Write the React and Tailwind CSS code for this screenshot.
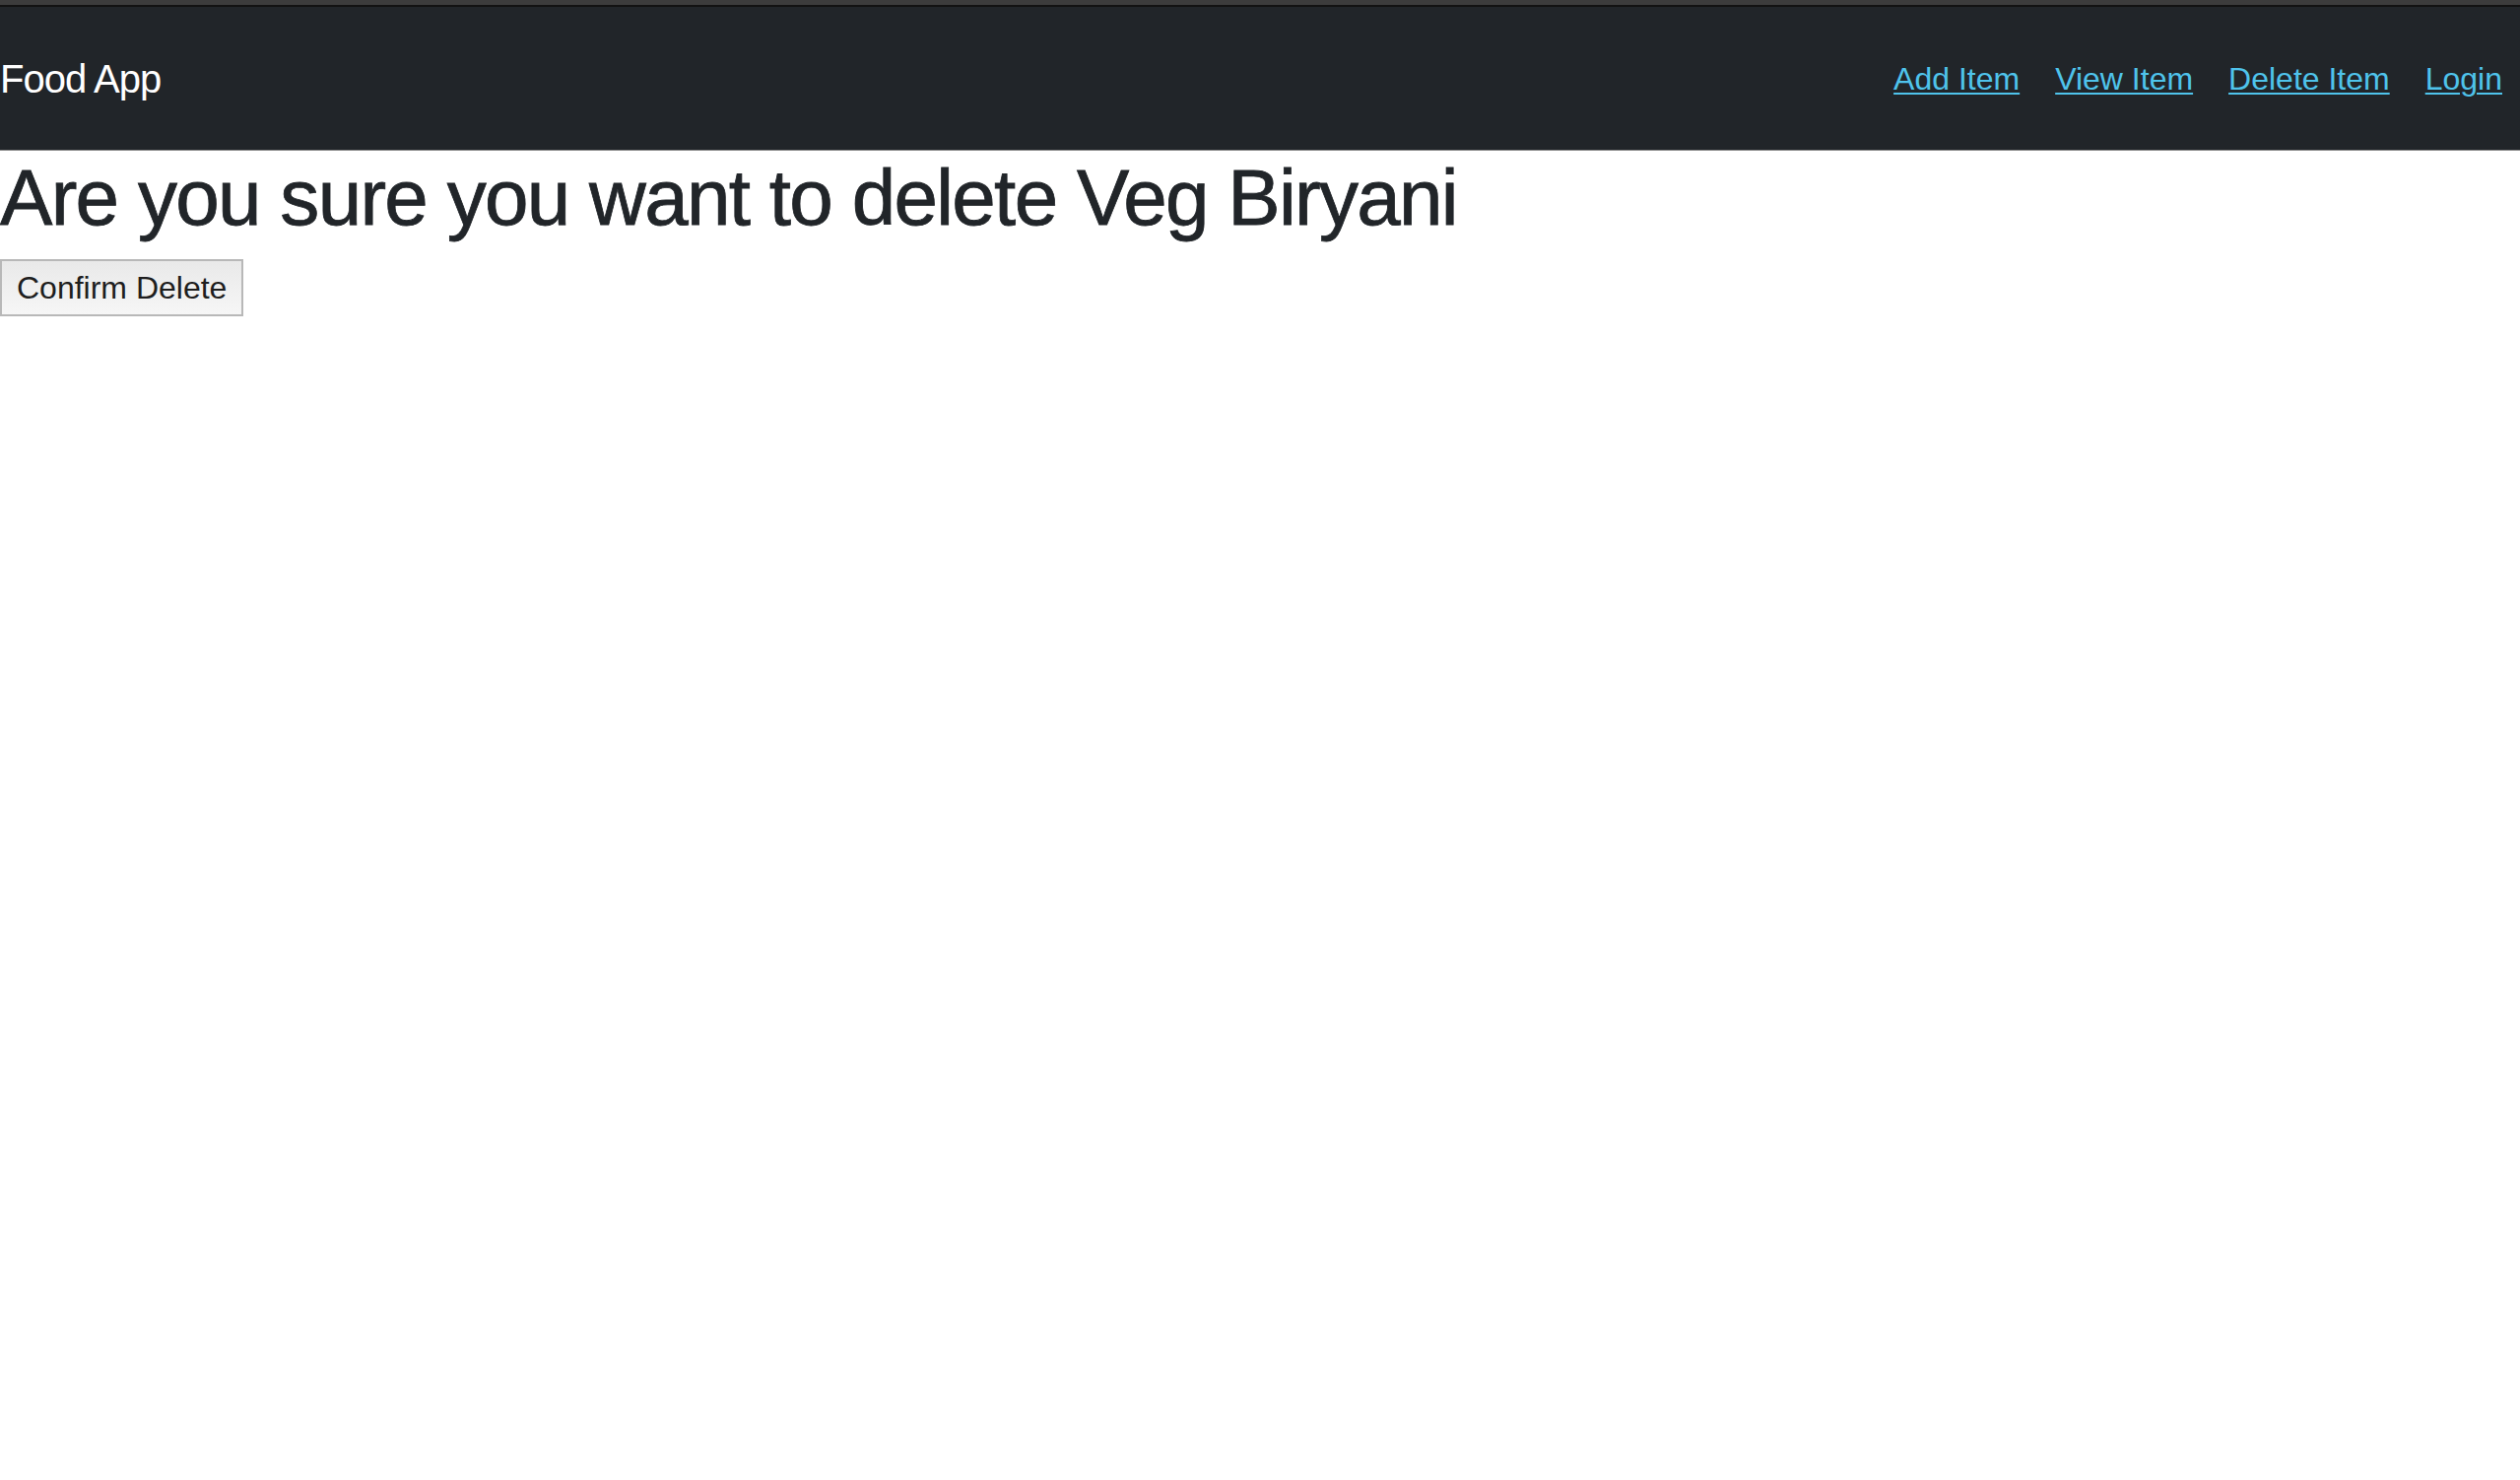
import React from 'react';

const NAV_LINKS = ['Add Item', 'View Item', 'Delete Item', 'Login'];

const App = () => {
  return (
    <div className="min-h-screen bg-white font-['Liberation_Sans',Arial,sans-serif] text-[#212529]">
      <div className="h-[5px] bg-[#3c3c3c]" />
      <div className="h-[2px] bg-[#121212]" />
      <nav className="flex h-[145px] items-center justify-between bg-[#212529] pr-[18px]">
        <a href="#" className="text-[40px] leading-[60px] tracking-[-1px] text-white">
          Food App
        </a>
        <div className="flex items-center gap-[36px]">
          {NAV_LINKS.map((label) => (
            <a
              key={label}
              href="#"
              className="text-[32px] leading-[48px] text-[#4fc3eb] underline decoration-2 underline-offset-[3px]"
            >
              {label}
            </a>
          ))}
        </div>
      </nav>
      <div className="h-px bg-[#8c8c8c]" />
      <h1 className="mb-[14px] text-[80px] leading-[96px] tracking-[-1.7px] [-webkit-text-stroke:0.8px_#212529]">
        Are you sure you want to delete Veg Biryani
      </h1>
      <button className="h-[58px] border-2 border-[#b8b8b8] bg-gradient-to-b from-[#e9e9e9] to-[#f6f6f6] px-[15px] text-[32px] leading-[48px] text-[#1e1e1e]">
        Confirm Delete
      </button>
    </div>
  );
};

export default App;
